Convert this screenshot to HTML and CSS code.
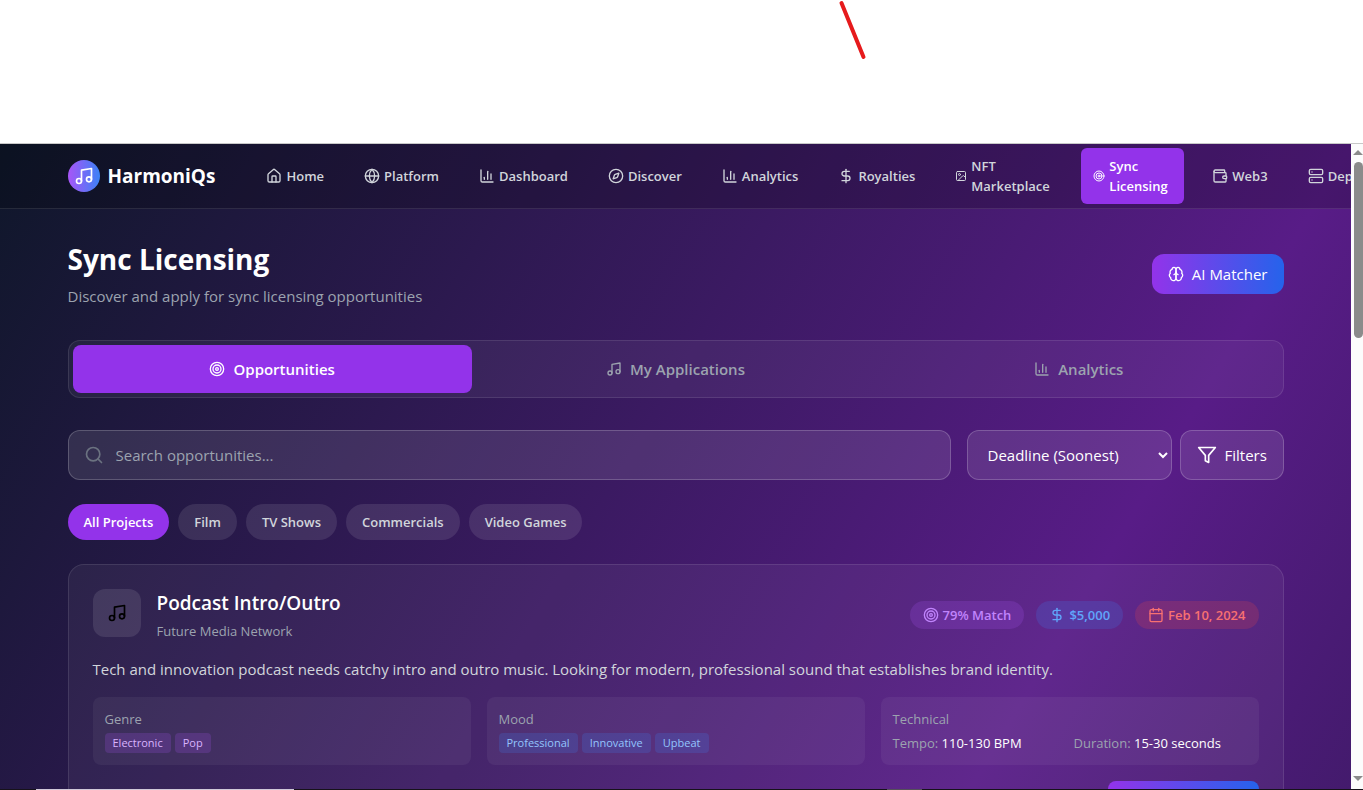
FILE: index.html
```html
<!DOCTYPE html>
<html lang="en">
<head>
<meta charset="utf-8">
<title>HarmoniQs - Sync Licensing</title>
<link rel="stylesheet" href="styles.css">
</head>
<body>
<svg class="defs" aria-hidden="true">
  <symbol id="music" viewBox="0 0 24 24"><path d="M9 18V5l12-2v13"/><circle cx="6" cy="18" r="3"/><circle cx="18" cy="16" r="3"/></symbol>
  <symbol id="home" viewBox="0 0 24 24"><path d="M15 21v-8a1 1 0 0 0-1-1h-4a1 1 0 0 0-1 1v8"/><path d="M3 10a2 2 0 0 1 .709-1.528l7-5.999a2 2 0 0 1 2.582 0l7 5.999A2 2 0 0 1 21 10v9a2 2 0 0 1-2 2H5a2 2 0 0 1-2-2z"/></symbol>
  <symbol id="globe" viewBox="0 0 24 24"><circle cx="12" cy="12" r="10"/><path d="M12 2a14.5 14.5 0 0 0 0 20 14.5 14.5 0 0 0 0-20"/><path d="M2 12h20"/></symbol>
  <symbol id="chart" viewBox="0 0 24 24"><path d="M3 3v16a2 2 0 0 0 2 2h16"/><path d="M18 17V9"/><path d="M13 17V5"/><path d="M8 17v-3"/></symbol>
  <symbol id="compass" viewBox="0 0 24 24"><path d="m16.24 7.76-1.804 5.411a2 2 0 0 1-1.265 1.265L7.76 16.24l1.804-5.411a2 2 0 0 1 1.265-1.265z"/><circle cx="12" cy="12" r="10"/></symbol>
  <symbol id="dollar" viewBox="0 0 24 24"><path d="M12 2v20"/><path d="M17 5H9.500a3.500 3.500 0 0 0 0 7h5a3.500 3.500 0 0 1 0 7H6"/></symbol>
  <symbol id="image" viewBox="0 0 24 24"><rect x="3" y="3" width="18" height="18" rx="2"/><circle cx="9" cy="9" r="2"/><path d="m21 15-3.086-3.086a2 2 0 0 0-2.828 0L6 21"/></symbol>
  <symbol id="target" viewBox="0 0 24 24"><circle cx="12" cy="12" r="10"/><circle cx="12" cy="12" r="6"/><circle cx="12" cy="12" r="2"/></symbol>
  <symbol id="wallet" viewBox="0 0 24 24"><path d="M19 7V4a1 1 0 0 0-1-1H5a2 2 0 0 0 0 4h15a1 1 0 0 1 1 1v4h-3a2 2 0 0 0 0 4h3a1 1 0 0 0 1-1v-2a1 1 0 0 0-1-1"/><path d="M3 5v14a2 2 0 0 0 2 2h15a1 1 0 0 0 1-1v-4"/></symbol>
  <symbol id="server" viewBox="0 0 24 24"><rect x="2" y="2" width="20" height="8" rx="2"/><rect x="2" y="14" width="20" height="8" rx="2"/><path d="M6 6h.01M6 18h.01"/></symbol>
  <symbol id="brain" viewBox="0 0 24 24"><path d="M12 5a3 3 0 1 0-5.997.125 4 4 0 0 0-2.526 5.77 4 4 0 0 0 .556 6.588A4 4 0 1 0 12 18Z"/><path d="M12 5a3 3 0 1 1 5.997.125 4 4 0 0 1 2.526 5.77 4 4 0 0 1-.556 6.588A4 4 0 1 1 12 18Z"/><path d="M15 13a4.500 4.500 0 0 1-3-4 4.500 4.500 0 0 1-3 4"/></symbol>
  <symbol id="search" viewBox="0 0 24 24"><circle cx="11" cy="11" r="8"/><path d="m21 21-4.300-4.300"/></symbol>
  <symbol id="filter" viewBox="0 0 24 24"><path d="M22 3H2l8 9.460V19l4 2v-8.540L22 3z"/></symbol>
  <symbol id="calendar" viewBox="0 0 24 24"><path d="M8 2v4"/><path d="M16 2v4"/><rect x="3" y="4" width="18" height="18" rx="2"/><path d="M3 10h18"/></symbol>
</svg>

<div class="blank">
  <svg class="stroke-mark" viewBox="0 0 30 62" aria-hidden="true"><path d="M6.500 3 28.500 57"/></svg>
</div>

<div class="viewport">
  <div class="page">
    <header class="topbar">
      <div class="container topbar-row">
        <a class="brand" href="#"><span class="brand-mark"><svg class="icon icon-md"><use href="#music"/></svg></span>HarmoniQs</a>
        <nav class="nav">
          <a class="nav-item" href="#"><svg class="icon"><use href="#home"/></svg><span>Home</span></a>
          <a class="nav-item" href="#"><svg class="icon"><use href="#globe"/></svg><span>Platform</span></a>
          <a class="nav-item" href="#"><svg class="icon"><use href="#chart"/></svg><span>Dashboard</span></a>
          <a class="nav-item" href="#"><svg class="icon"><use href="#compass"/></svg><span>Discover</span></a>
          <a class="nav-item" href="#"><svg class="icon"><use href="#chart"/></svg><span>Analytics</span></a>
          <a class="nav-item" href="#"><svg class="icon"><use href="#dollar"/></svg><span>Royalties</span></a>
          <a class="nav-item nav-item-tall" href="#"><svg class="icon icon-sm"><use href="#image"/></svg><span>NFT<br>Marketplace</span></a>
          <a class="nav-item nav-item-tall active" href="#"><svg class="icon icon-sm"><use href="#target"/></svg><span>Sync<br>Licensing</span></a>
          <a class="nav-item" href="#"><svg class="icon"><use href="#wallet"/></svg><span>Web3</span></a>
          <a class="nav-item" href="#"><svg class="icon"><use href="#server"/></svg><span>Deploy</span></a>
        </nav>
      </div>
    </header>

    <main class="container main">
      <div class="heading">
        <div>
          <h1>Sync Licensing</h1>
          <p>Discover and apply for sync licensing opportunities</p>
        </div>
        <button class="matcher" type="button"><svg class="icon"><use href="#brain"/></svg>AI Matcher</button>
      </div>

      <div class="tabs">
        <button class="tab active" type="button"><svg class="icon"><use href="#target"/></svg>Opportunities</button>
        <button class="tab" type="button"><svg class="icon"><use href="#music"/></svg>My Applications</button>
        <button class="tab" type="button"><svg class="icon"><use href="#chart"/></svg>Analytics</button>
      </div>

      <div class="toolbar">
        <label class="search"><svg class="icon icon-md"><use href="#search"/></svg><input type="text" placeholder="Search opportunities..." aria-label="Search opportunities"></label>
        <div class="toolbar-end">
          <select class="sort" aria-label="Sort by"><option>Deadline (Soonest)</option></select>
          <button class="filters" type="button"><svg class="icon icon-md"><use href="#filter"/></svg>Filters</button>
        </div>
      </div>

      <div class="chips">
        <button class="chip active" type="button">All Projects</button>
        <button class="chip" type="button">Film</button>
        <button class="chip" type="button">TV Shows</button>
        <button class="chip" type="button">Commercials</button>
        <button class="chip" type="button">Video Games</button>
      </div>

      <article class="card">
        <div class="card-head">
          <div class="card-icon"><svg class="icon icon-md"><use href="#music"/></svg></div>
          <div class="card-title">
            <h2>Podcast Intro/Outro</h2>
            <p>Future Media Network</p>
          </div>
          <div class="badges">
            <span class="badge match"><svg class="icon"><use href="#target"/></svg>79% Match</span>
            <span class="badge price"><svg class="icon"><use href="#dollar"/></svg>$5,000</span>
            <span class="badge due"><svg class="icon"><use href="#calendar"/></svg>Feb 10, 2024</span>
          </div>
        </div>
        <p class="summary">Tech and innovation podcast needs catchy intro and outro music. Looking for modern, professional sound that establishes brand identity.</p>
        <div class="facts">
          <section class="fact">
            <h3>Genre</h3>
            <div class="tags"><span class="tag genre">Electronic</span><span class="tag genre">Pop</span></div>
          </section>
          <section class="fact">
            <h3>Mood</h3>
            <div class="tags"><span class="tag mood">Professional</span><span class="tag mood">Innovative</span><span class="tag mood">Upbeat</span></div>
          </section>
          <section class="fact">
            <h3>Technical</h3>
            <div class="specs"><span>Tempo: <b>110-130 BPM</b></span><span>Duration: <b>15-30 seconds</b></span></div>
          </section>
        </div>
        <div class="card-actions"><button class="apply" type="button" aria-label="Submit application"></button></div>
      </article>
    </main>
  </div>
  <div class="scrollbar" aria-hidden="true">
    <svg class="arrow" viewBox="0 0 10 5"><path d="M5 0 10 5H0z"/></svg>
    <div class="track"><div class="thumb"></div></div>
    <svg class="arrow" viewBox="0 0 10 5"><path d="M0 0H10L5 5z"/></svg>
  </div>
</div>
<div class="edge"><span class="edge-light"></span><span class="edge-dim"></span></div>
</body>
</html>
```

FILE: styles.css
```css
* { box-sizing: border-box; margin: 0; }

body {
  height: 100vh;
  display: flex;
  flex-direction: column;
  overflow: hidden;
  background: #fff;
  color: #fff;
  font: 15px/24px "Open Sans", "Noto Sans", sans-serif;
}

button, input, select { font: inherit; color: inherit; border: 0; background: none; }
button { cursor: pointer; padding: 0; white-space: nowrap; }
a { color: inherit; text-decoration: none; }

.defs { position: absolute; width: 0; height: 0; }

.icon {
  width: 16px;
  height: 16px;
  flex: none;
  fill: none;
  stroke: currentColor;
  stroke-width: 2;
  stroke-linecap: round;
  stroke-linejoin: round;
}
.icon-sm { width: 12px; height: 12px; }
.icon-md { width: 20px; height: 20px; }

.blank {
  position: relative;
  flex: none;
  height: 144px;
  border-bottom: 1px solid #c8c8c8;
}
.stroke-mark {
  position: absolute;
  left: 835px;
  top: 0;
  width: 30px;
  height: 62px;
  fill: none;
  stroke: #e61a1c;
  stroke-width: 4;
  stroke-linecap: round;
  overflow: visible;
}

.viewport { flex: 1; min-height: 0; display: flex; }

.page {
  flex: 1;
  min-width: 0;
  overflow: hidden;
  background: linear-gradient(to bottom right, #0f172a, #581c87, #0f172a) 0 0 / 100% 2290px no-repeat;
}

.container { max-width: 1280px; margin: 0 auto; padding: 0 32px; }

.topbar { background: rgba(0, 0, 0, .2); border-bottom: 1px solid rgba(255, 255, 255, .1); }
.topbar-row { height: 64px; display: flex; align-items: center; gap: 39px; }

.brand { display: flex; align-items: center; gap: 8px; font-size: 19px; line-height: 28px; font-weight: 700; }
.brand-mark {
  width: 32px;
  height: 32px;
  display: grid;
  place-items: center;
  border-radius: 50%;
  background: linear-gradient(to right, #a855f7, #3b82f6);
}

.nav { display: flex; align-items: center; gap: 16px; }
.nav-item {
  flex: none;
  display: flex;
  align-items: center;
  gap: 4px;
  padding: 8px 12px;
  border-radius: 6px;
  color: #d1d5db;
  font-size: 13px;
  line-height: 20px;
  font-weight: 600;
}
.nav-item-tall { width: 122px; }
.nav-item.active { width: 103px; background: #9333ea; color: #fff; }

.main { padding-top: 31px; }

.heading { display: flex; align-items: center; justify-content: space-between; margin-bottom: 32px; }
.heading h1 { font-size: 28px; line-height: 38px; font-weight: 700; margin-bottom: 6px; }
.heading p { color: #9ca3af; }

.matcher {
  height: 40px;
  padding: 0 16px;
  display: flex;
  align-items: center;
  gap: 8px;
  border-radius: 12px;
  background: linear-gradient(to right, #9333ea, #2563eb);
}

.tabs {
  display: grid;
  grid-template-columns: repeat(3, 1fr);
  gap: 4px;
  padding: 4px;
  margin-bottom: 32px;
  border: 1px solid rgba(255, 255, 255, .1);
  border-radius: 12px;
  background: rgba(255, 255, 255, .05);
}
.tab {
  height: 48px;
  display: flex;
  align-items: center;
  justify-content: center;
  gap: 8px;
  border-radius: 8px;
  color: #9ca3af;
  font-weight: 600;
}
.tab.active { background: #9333ea; color: #fff; }

.toolbar { display: flex; gap: 16px; margin-bottom: 24px; }
.toolbar-end { display: flex; gap: 8px; }
.search, .sort, .filters {
  height: 50px;
  border: 1px solid rgba(255, 255, 255, .2);
  border-radius: 12px;
  background: rgba(255, 255, 255, .1);
}
.search { flex: 1; display: flex; align-items: center; gap: 12px; padding: 0 16px 0 15px; color: #6b7280; }
.search input { flex: 1; min-width: 0; padding: 0; outline: 0; color: #fff; }
.search input::placeholder { color: #9ca3af; opacity: 1; }
.sort { width: 205px; padding: 0 0 0 16px; color: #fff; }
.filters { width: 104px; padding: 0 16px; display: flex; align-items: center; gap: 8px; }

.chips { display: flex; gap: 9px; margin-bottom: 24px; }
.chip {
  height: 36px;
  padding: 0 16px;
  border-radius: 18px;
  background: rgba(255, 255, 255, .1);
  color: #d1d5db;
  font-size: 13px;
  line-height: 20px;
  font-weight: 600;
}
.chip.active { background: #9333ea; color: #fff; }

.card {
  padding: 24px;
  border: 1px solid rgba(255, 255, 255, .1);
  border-radius: 16px;
  background: rgba(255, 255, 255, .05);
}
.card-head { display: flex; gap: 16px; margin-bottom: 16px; }
.card-icon {
  width: 48px;
  height: 48px;
  display: grid;
  place-items: center;
  border-radius: 12px;
  background: rgba(255, 255, 255, .1);
  color: #000;
}
.card-title { flex: 1; }
.card-title h2 { font-size: 19px; line-height: 28px; font-weight: 600; margin-bottom: 4px; }
.card-title p { font-size: 13px; line-height: 20px; color: #9ca3af; }

.badges { display: flex; align-items: center; gap: 12px; }
.badge {
  display: flex;
  align-items: center;
  gap: 4px;
  padding: 4px 13px;
  border-radius: 14px;
  font-size: 13px;
  line-height: 20px;
  font-weight: 600;
}
.match { color: #c084fc; background: rgba(168, 85, 247, .2); }
.price { color: #60a5fa; background: rgba(59, 130, 246, .2); }
.due { color: #f87171; background: rgba(239, 68, 68, .2); }

.summary { color: #d1d5db; margin-bottom: 16px; }

.facts { display: grid; grid-template-columns: repeat(3, 1fr); gap: 16px; margin-bottom: 16px; }
.fact { padding: 12px; border-radius: 8px; background: rgba(255, 255, 255, .05); }
.fact h3 { font-size: 13px; line-height: 20px; font-weight: 400; color: #9ca3af; margin-bottom: 4px; }
.tags { display: flex; gap: 4px; }
.tag { padding: 0 8px; border-radius: 4px; font-size: 11px; line-height: 20px; }
.genre { color: #d8b4fe; background: rgba(168, 85, 247, .2); }
.mood { color: #93c5fd; background: rgba(59, 130, 246, .2); }
.specs { display: grid; grid-template-columns: 1fr 1fr; gap: 8px; font-size: 13px; line-height: 20px; color: #9ca3af; }
.specs b { font-weight: 500; color: #fff; }

.card-actions { display: flex; justify-content: flex-end; }
.apply { width: 151px; height: 40px; border-radius: 8px; background: linear-gradient(to right, #9333ea, #2563eb); }

.scrollbar {
  flex: none;
  width: 12px;
  display: flex;
  flex-direction: column;
  align-items: center;
  gap: 7px;
  padding: 6px 0 8px 2px;
  background: #fcfcfc;
}
.arrow { width: 10px; height: 5px; flex: none; fill: #8b8b8b; }
.track { flex: 1; width: 9px; }
.thumb { width: 9px; height: 29%; border-radius: 5px; background: #8b8b8b; }

.edge { flex: none; height: 1px; display: flex; gap: 593px; padding-left: 36px; background: #16121a; }
.edge-light { width: 258px; background: #d0c8d8; }
.edge-dim { width: 35px; background: #55505a; }
```
